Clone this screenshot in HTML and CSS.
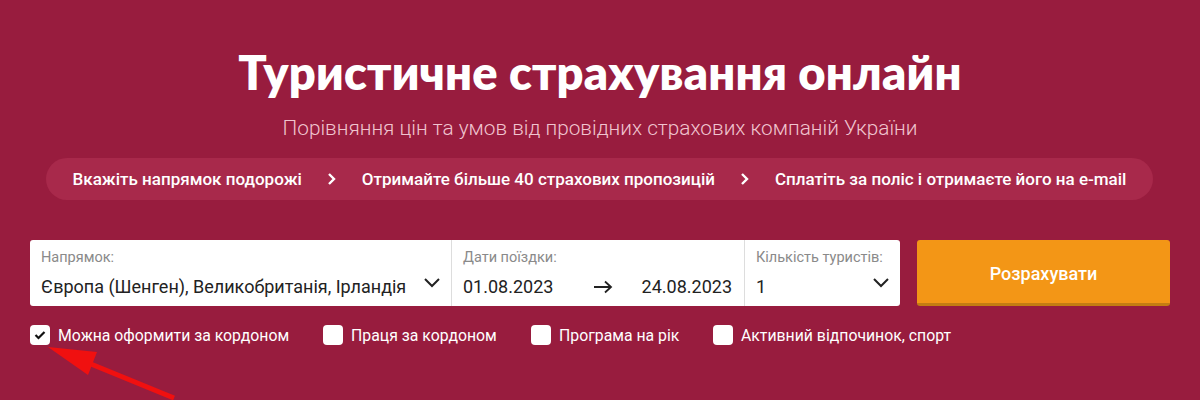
FILE: index.html
```
<!DOCTYPE html>
<html lang="uk">
<head>
<meta charset="utf-8">
<link rel="stylesheet" href="styles.css">
</head>
<body>
<div class="hero">
  <h1 class="title">Туристичне страхування онлайн</h1>
  <p class="subtitle">Порівняння цін та умов від провідних страхових компаній України</p>
  <div class="steps">
    <span class="step">Вкажіть напрямок подорожі</span>
    <svg class="chev" width="12" height="14" viewBox="0 0 12 14"><path d="M3 2l5 5-5 5" fill="none" stroke="#fff" stroke-width="2.4"/></svg>
    <span class="step">Отримайте більше 40 страхових пропозицій</span>
    <svg class="chev" width="12" height="14" viewBox="0 0 12 14"><path d="M3 2l5 5-5 5" fill="none" stroke="#fff" stroke-width="2.4"/></svg>
    <span class="step">Сплатіть за поліс і отримаєте його на e-mail</span>
  </div>
  <div class="form-row">
    <div class="form">
      <div class="field f-dir">
        <div class="label">Напрямок:</div>
        <div class="value">Європа (Шенген), Великобританія, Ірландія
          <svg class="caret" width="18" height="12" viewBox="0 0 18 12"><path d="M2 2l7 7 7-7" fill="none" stroke="#222" stroke-width="2"/></svg>
        </div>
      </div>
      <div class="field f-dates">
        <div class="label">Дати поїздки:</div>
        <div class="value"><span>01.08.2023</span><svg class="arrow" width="20" height="14" viewBox="0 0 20 14"><path d="M1 7h17M12 1.5l6 5.5-6 5.5" fill="none" stroke="#222" stroke-width="1.8"/></svg><span>24.08.2023</span></div>
      </div>
      <div class="field f-num">
        <div class="label">Кількість туристів:</div>
        <div class="value">1
          <svg class="caret" width="18" height="12" viewBox="0 0 18 12"><path d="M2 2l7 7 7-7" fill="none" stroke="#222" stroke-width="2"/></svg>
        </div>
      </div>
    </div>
    <button class="btn">Розрахувати</button>
  </div>
  <div class="checks">
    <label class="check c1"><span class="box"><svg width="12" height="10" viewBox="0 0 12 10"><path d="M1.5 5l3 3 6-6" fill="none" stroke="#111" stroke-width="2.2"/></svg></span>Можна оформити за кордоном</label>
    <label class="check c2"><span class="box"></span>Праця за кордоном</label>
    <label class="check c3"><span class="box"></span>Програма на рік</label>
    <label class="check c4"><span class="box"></span>Активний відпочинок, спорт</label>
  </div>
  <svg class="red-arrow" width="200" height="80" viewBox="0 0 200 80">
    <path d="M174 78 L86 42" stroke="#f01010" stroke-width="5" fill="none"/>
    <path d="M48 27 L97 32 L88 55 Z" fill="#f01010"/>
  </svg>
</div>
</body>
</html>
```
FILE: styles.css
```
* { box-sizing: border-box; }
html, body { margin: 0; padding: 0; }
body {
  width: 1200px;
  height: 400px;
  overflow: hidden;
  background: #981c3e;
  font-family: Roboto, "Liberation Sans", sans-serif;
}
.hero {
  position: relative;
  height: 400px;
  padding-top: 44px;
  display: flex;
  flex-direction: column;
  align-items: center;
}
.title {
  margin: 0;
  font-family: Lato, "Liberation Sans", sans-serif;
  font-weight: 800;
  font-size: 47px;
  line-height: 56px;
  color: #fff;
  letter-spacing: 0.2px;
}
.subtitle {
  margin: 16px 0 0;
  font-size: 20.8px;
  font-weight: 300;
  line-height: 24px;
  color: #f0c4cf;
}
.steps {
  margin-top: 18px;
  width: 1107px;
  height: 42px;
  margin-left: -1px;
  border-radius: 21px;
  background: #a8294b;
  display: flex;
  align-items: center;
  justify-content: center;
  padding: 0 20px;
}
.step {
  color: #fff;
  font-size: 17px;
  font-weight: 500;
  white-space: nowrap;
}
.chev { margin: 0 24px 0 24px; }
.form-row {
  margin-top: 40px;
  align-self: stretch;
  padding-left: 30px;
  display: flex;
  gap: 17px;
}
.form {
  width: 870px;
  height: 66px;
  background: #fff;
  border-radius: 3px;
  display: flex;
}
.field {
  padding: 9px 12px 0 11px;
  border-right: 1px solid #ddd;
}
.field:last-child { border-right: none; }
.f-dir { width: 422px; }
.f-dates { width: 293px; }
.f-num { flex: 1; }
.label {
  font-size: 14.5px;
  color: #8a8a8a;
  line-height: 17px;
}
.value {
  margin-top: 8px;
  font-size: 18px;
  color: #222;
  line-height: 26px;
  display: flex;
  align-items: center;
  justify-content: space-between;
}
.caret { margin-top: -8px; margin-right: -2px; }
.arrow { margin-left: 10px; }
.btn {
  width: 253px;
  height: 66px;
  border: none;
  border-radius: 3px;
  border-bottom: 3px solid #c47d12;
  background: #f39616;
  color: #fff;
  font-family: Roboto, "Liberation Sans", sans-serif;
  font-size: 18px;
  font-weight: 500;
  padding: 0;
  padding-top: 3px;
}
.checks {
  margin-top: 20px;
  align-self: stretch;
  padding-left: 30px;
  display: flex;
}
.check {
  display: flex;
  align-items: center;
  color: #fff;
  font-size: 15.8px;
  line-height: 20px;
}
.box {
  width: 20px;
  height: 20px;
  background: #fff;
  border-radius: 4px;
  margin-right: 8px;
  margin-top: -2px;
  display: flex;
  align-items: center;
  justify-content: center;
}
.c1 { width: 293px; }
.c2 { width: 208px; }
.c3 { width: 182px; }
.red-arrow {
  position: absolute;
  left: 0;
  top: 320px;
}
```
